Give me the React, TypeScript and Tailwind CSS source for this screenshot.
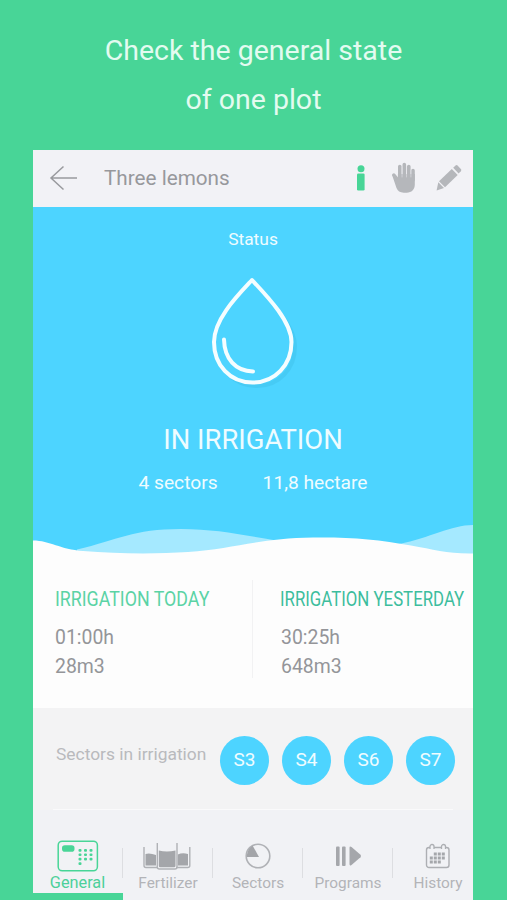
import type { ReactNode } from 'react';

const sectors = ['S3', 'S4', 'S6', 'S7'];

const dots = [
  [0, 0], [5.5, 0], [11, 0],
  [0, 4], [5.5, 4], [11, 4],
  [0, 8], [5.5, 8], [11, 8],
  [0, 12],
];

function BackIcon() {
  return (
    <svg width="30" height="26" viewBox="0 0 30 26" fill="none" stroke="#999a9e" strokeWidth="1.5">
      <path d="M14.5 1.5 2 13l12.5 11.5M2 13h26" />
    </svg>
  );
}

function InfoIcon() {
  return (
    <svg width="10" height="26" viewBox="0 0 10 26" fill="#48d597">
      <circle cx="5" cy="3.7" r="3.5" />
      <rect x="1" y="8.5" width="7.6" height="17" rx="1.3" />
    </svg>
  );
}

function HandIcon() {
  return (
    <svg width="25" height="31" viewBox="0 0 25 31" fill="none" stroke="#b5b7bb" strokeWidth="3.6" strokeLinecap="round">
      <path d="M8.8 18V4.5M13.3 17V2.6M17.8 17V4.5M22 18V8.5M2.8 13.2 8 19.5" />
      <path d="M6.9 12h16.9v10.500c0 5-3.300 8.200-8 8.200h-3c-4 0-6-1.800-7.300-4.700L1.600 14.500l5.300 2z" fill="#b5b7bb" stroke="none" />
      <path d="M11.050 5v10M15.550 5v10M19.900 8v7" stroke="#e0e1e5" strokeWidth=".6" />
    </svg>
  );
}

function PencilIcon() {
  return (
    <svg width="26" height="26" viewBox="0 0 26 26" fill="#b5b7bb">
      <path d="M17.200 2.800l2.300-2.200q1.200-1 2.300.1l3 3.200q1 1.200 0 2.300l-2.200 2.200z" />
      <path d="M15.800 4l5.900 6L9 22.300 3 16.300z" />
      <path d="M2.300 17.300l5.700 5.800L.6 25.400z" />
    </svg>
  );
}

function DropIcon() {
  return (
    <svg className="block" width="94" height="116" viewBox="0 0 94 116" fill="none" strokeLinecap="round" strokeLinejoin="round">
      <path
        d="M50 11C38 26 12 48 12 71c0 24 17 40 39 40s38-17 38-40C89 50 63 26 50 11z"
        stroke="#43c5ee"
        strokeWidth="4"
        opacity=".6"
      />
      <path d="M46 5C32 20 8 44 8 67c0 23 16 40.500 38.500 40.500S85.500 90 85.500 67C85.500 46 60 20 46 5z" fill="#4dd4ff" stroke="#f5fdff" strokeWidth="4" />
      <path d="M18 64.500C18.500 84 29.500 96 47 96.500" stroke="#f5fdff" strokeWidth="4" />
    </svg>
  );
}

function Waves() {
  return (
    <svg className="block" width="440" height="34" viewBox="0 -10 440 34">
      <path d="M44 19.500C85 10 100-1 148-1c35 0 62 6 98 12v13H44zM366 14C397 8 418-5 440-5v34h-74z" fill="#a5e9ff" />
      <path d="M0 10.500c17 0 27 9 50 10.500 35 3 75 3 105 1 45-3 72-14 125-14.500 37-.5 66 2 98 8 23 4 37 8.500 62 8V34H0z" fill="#fdfdfd" />
    </svg>
  );
}

function GeneralIcon() {
  return (
    <svg width="42" height="32" viewBox="0 0 42 32" fill="#48d597">
      <rect x="1.200" y="1.200" width="39.200" height="29.600" rx="4" fill="none" stroke="#48d597" strokeWidth="1.500" />
      <rect x="5" y="5.200" width="12.500" height="6.500" rx="2.800" />
      {dots.map(([x, y]) => (
        <rect key={`${x}-${y}`} x={21.5 + x} y={9 + y * 1.1} width="3" height="2.7" rx="1" />
      ))}
    </svg>
  );
}

function FertilizerIcon() {
  return (
    <svg width="50" height="30" viewBox="0 0 50 30" fill="none" stroke="#b0b2b6" strokeWidth="1.400" strokeLinejoin="round">
      <path d="M2.500 13q4-1.500 10.500 1v10.500H2.500zM34.800 13.500q4.500-2 10.200-.5v11.500H34.800z" fill="#a4a6aa" stroke="none" />
      <path d="M1 6v18.500q0 2 2 2h11.500M46.800 6v18.500q0 2-2 2H33" />
      <path d="M15.800 9.500q8 2 16.700 0v15.300q0 1.500-1.500 1.500H17.300q-1.500 0-1.500-1.500z" fill="#a4a6aa" stroke="none" />
      <path d="M14.300 2v24q0 2 2 2h15.700q2 0 2-2V2" />
    </svg>
  );
}

function SectorsIcon() {
  return (
    <svg width="26" height="26" viewBox="0 0 26 26">
      <circle cx="13" cy="13" r="11.8" fill="none" stroke="#b0b2b6" strokeWidth="1.6" />
      <path d="M14 14H1.800C2 8 4.500 4.500 7.700 2.800z" fill="#a3a5a9" />
    </svg>
  );
}

function ProgramsIcon() {
  return (
    <svg className="ml-[2px]" width="28" height="22" viewBox="0 0 28 22" fill="#a5a7ab">
      <rect x="1" y="1.5" width="3.6" height="19.5" rx="1" />
      <rect x="7" y="1.5" width="3.6" height="19.5" rx="1" />
      <path d="M14.500 3q0-2.300 2-.9l9 7.700q1 1.200 0 2.400l-9 7.700q-2 1.400-2-.9z" />
    </svg>
  );
}

function HistoryIcon() {
  return (
    <svg width="26" height="26" viewBox="0 0 26 26" fill="#a5a7ab">
      <rect x="1.5" y="4.5" width="22.5" height="20" rx="2.5" fill="none" stroke="#adafb3" strokeWidth="1.4" />
      <path d="M5 6V3.500a2 2 0 0 1 4 0V6M16.500 6V3.500a2 2 0 0 1 4 0V6" fill="#f1f2f5" stroke="#adafb3" strokeWidth="1.300" />
      <path d="M8.800 9.500h3v3h-3zM12.800 9.500h3v3h-3zM16.800 9.500h3v3h-3zM4.800 13.500h3v3h-3zM8.800 13.500h3v3h-3zM12.800 13.500h3v3h-3zM16.800 13.500h3v3h-3zM4.800 17.500h3v3h-3zM8.800 17.500h3v3h-3zM12.800 17.500h3v3h-3z" />
    </svg>
  );
}

const tabs: { label: string; icon: ReactNode; active?: boolean }[] = [
  { label: 'General', icon: <GeneralIcon />, active: true },
  { label: 'Fertilizer', icon: <FertilizerIcon /> },
  { label: 'Sectors', icon: <SectorsIcon /> },
  { label: 'Programs', icon: <ProgramsIcon /> },
  { label: 'History', icon: <HistoryIcon /> },
];

export default function App() {
  return (
    <div className="flex h-[900px] w-[507px] flex-col overflow-hidden bg-[#48d597] font-['Roboto',sans-serif]">
      <h1 className="h-[150px] shrink-0 pt-[26px] text-center text-[28.5px] leading-[49px] text-[#e3fbf0]">
        Check the general state
        <br />
        of one plot
      </h1>

      <div className="ml-[33px] flex h-[750px] w-[440px] flex-col overflow-hidden bg-[#fdfdfd]">
        <header className="flex h-[57px] shrink-0 items-center bg-[#f2f2f6] pb-[2px] pl-4">
          <BackIcon />
          <span className="ml-[25px] w-[252px] pt-[2px] text-[20.7px] text-[#97989c]">Three lemons</span>
          <InfoIcon />
          <span className="ml-[25px] flex">
            <HandIcon />
          </span>
          <span className="ml-[20px] flex">
            <PencilIcon />
          </span>
        </header>

        <section className="flex h-[347px] shrink-0 flex-col items-center bg-[#4dd4ff] text-[#effcff]">
          <p className="mt-5 text-[17.4px] leading-6">Status</p>
          <div className="mt-[24px]">
            <DropIcon />
          </div>
          <h2 className="mt-[33px] text-[27.4px] leading-8">IN IRRIGATION</h2>
          <div className="mt-[15px] flex gap-[45px] text-[19.2px] leading-6">
            <span>4 sectors</span>
            <span>11,8 hectare</span>
          </div>
          <div className="mt-auto">
            <Waves />
          </div>
        </section>

        <section className="flex h-[154px] shrink-0 text-[19.4px] leading-[29px] text-[#949599]">
          <div className="w-[219px] shrink-0 pt-[31px] pl-[22px]">
            <h3 className="origin-left scale-x-[.89] text-[20px] whitespace-nowrap text-[#5bd3a5]">IRRIGATION TODAY</h3>
            <p className="mt-[9px]">01:00h</p>
            <p>28m3</p>
          </div>
          <div className="mt-[26px] h-[98px] w-px shrink-0 bg-[#f2f2f3]" />
          <div className="w-[220px] shrink-0 pt-[31px] pl-[28px]">
            <h3 className="-ml-px origin-left scale-x-[.84] text-[20px] whitespace-nowrap text-[#3dbd9d]">IRRIGATION YESTERDAY</h3>
            <p className="mt-[9px]">30:25h</p>
            <p>648m3</p>
          </div>
        </section>

        <section className="flex h-[102px] shrink-0 flex-col bg-[#f3f3f4]">
          <div className="flex flex-1 items-center pt-[3px] pl-[23px]">
            <span className="mb-[11px] w-[164px] text-[17.4px] text-[#b9babd]">Sectors in irrigation</span>
            <div className="flex gap-[13px]">
              {sectors.map((s) => (
                <span key={s} className="flex size-[49px] items-center justify-center rounded-full bg-[#4dd4ff] pt-px text-[19px] text-[#effcff]">
                  {s}
                </span>
              ))}
            </div>
          </div>
          <div className="mx-5 h-px bg-[#fafafb]" />
        </section>

        <nav className="flex flex-1 bg-[#f1f2f5] pt-[27px]">
          {tabs.map((tab) => (
            <div key={tab.label} className="relative flex w-[90px] shrink-0 flex-col items-center">
              <div className="-ml-px flex h-[37px] items-center">{tab.icon}</div>
              <span className={tab.active ? '-ml-px text-[16.3px] leading-[18px] text-[#4cd09a]' : 'text-[15.4px] leading-[18px] text-[#b3b4b8]'}>
                {tab.label}
              </span>
              {tab.active && <div className="mt-auto h-[7px] w-full shrink-0 bg-[#48d597]" />}
              {tab.label !== 'History' && <div className="absolute top-[11px] right-0 h-[30px] w-px bg-[#dddee1]" />}
            </div>
          ))}
        </nav>
      </div>
    </div>
  );
}
